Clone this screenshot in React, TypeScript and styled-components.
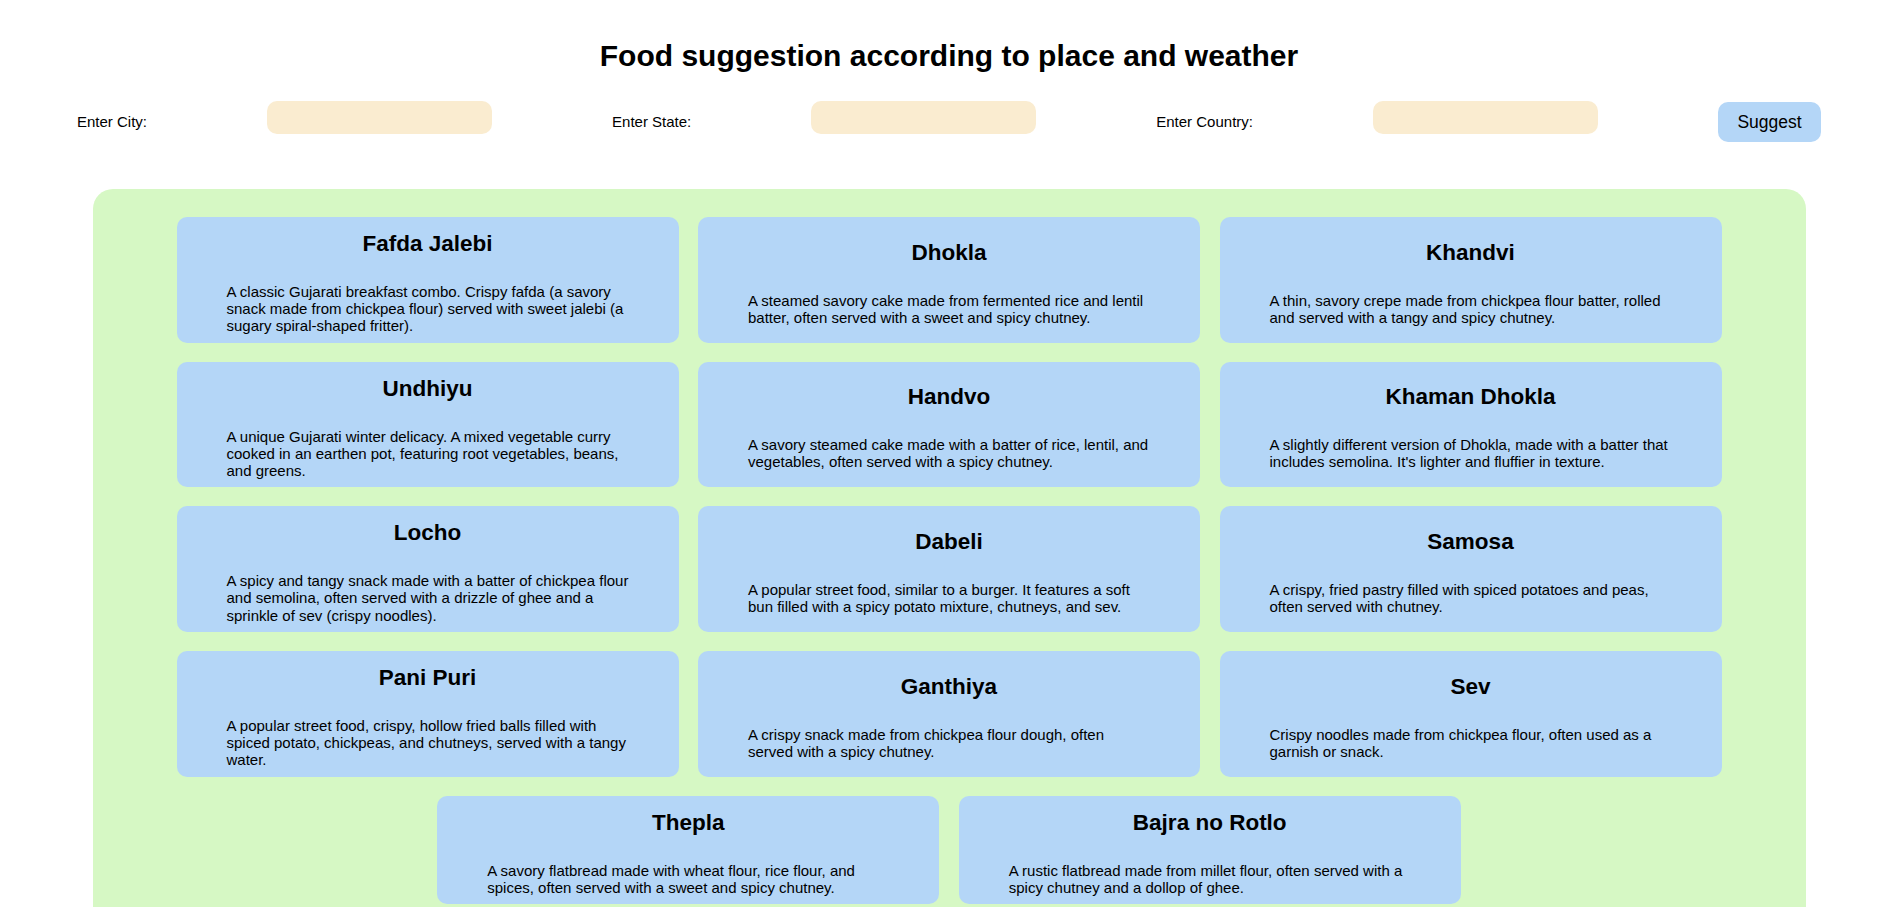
import React from "react";
import styled, { createGlobalStyle } from "styled-components";

const GlobalStyle = createGlobalStyle`
  html, body {
    margin: 0;
    padding: 0;
    background: #ffffff;
  }
  body {
    font-family: "Liberation Sans", Arial, sans-serif;
    font-size: 15px;
    color: #000000;
  }
  * { box-sizing: border-box; }
`;

const Page = styled.div`
  display: flex;
  flex-direction: column;
  align-items: center;
  padding-top: 39px;
`;

const Title = styled.h1`
  margin: 0;
  font-size: 30px;
  font-weight: 700;
  line-height: 34.5px;
  text-align: center;
`;

const Form = styled.form`
  display: flex;
  align-items: flex-start;
  justify-content: center;
  gap: 120px;
  margin-top: 27.5px;
  width: 100%;
`;

const Label = styled.label`
  margin-top: 12px;
  font-size: 15px;
  line-height: 17.25px;
  white-space: nowrap;
`;

const Field = styled.input`
  width: 225px;
  height: 33px;
  border: none;
  border-radius: 10px;
  background: #faecd0;
  padding: 0 10px;
  font-family: inherit;
  font-size: 15px;
  outline: none;
`;

const SuggestButton = styled.button`
  margin-top: 1px;
  width: 103px;
  height: 40px;
  border: none;
  border-radius: 10px;
  background: #b4d6f7;
  color: #000000;
  font-family: "Liberation Sans", Arial, sans-serif;
  font-size: 17.5px;
  cursor: pointer;
`;

const Board = styled.section`
  margin-top: 47px;
  width: 1713px;
  background: #d6f8c4;
  border-radius: 20px;
  padding: 28px 0 30px;
  display: flex;
  flex-wrap: wrap;
  justify-content: center;
  gap: 19px 19.5px;
`;

const Card = styled.article`
  width: 502px;
  background: #b4d6f7;
  border-radius: 10px;
  padding: 14px 0 8px;
  display: flex;
  flex-direction: column;
  justify-content: center;
`;

const CardTitle = styled.h2`
  margin: 0 0 26px;
  font-size: 22.5px;
  font-weight: 700;
  line-height: 25.9px;
  text-align: center;
`;

const CardText = styled.p`
  margin: 0 48px 0 50px;
  font-size: 15px;
  line-height: 17.25px;
  text-align: left;
`;

const foods = [
  {
    name: "Fafda Jalebi",
    text: "A classic Gujarati breakfast combo. Crispy fafda (a savory snack made from chickpea flour) served with sweet jalebi (a sugary spiral-shaped fritter).",
  },
  {
    name: "Dhokla",
    text: "A steamed savory cake made from fermented rice and lentil batter, often served with a sweet and spicy chutney.",
  },
  {
    name: "Khandvi",
    text: "A thin, savory crepe made from chickpea flour batter, rolled and served with a tangy and spicy chutney.",
  },
  {
    name: "Undhiyu",
    text: "A unique Gujarati winter delicacy. A mixed vegetable curry cooked in an earthen pot, featuring root vegetables, beans, and greens.",
  },
  {
    name: "Handvo",
    text: "A savory steamed cake made with a batter of rice, lentil, and vegetables, often served with a spicy chutney.",
  },
  {
    name: "Khaman Dhokla",
    text: "A slightly different version of Dhokla, made with a batter that includes semolina. It's lighter and fluffier in texture.",
  },
  {
    name: "Locho",
    text: "A spicy and tangy snack made with a batter of chickpea flour and semolina, often served with a drizzle of ghee and a sprinkle of sev (crispy noodles).",
  },
  {
    name: "Dabeli",
    text: "A popular street food, similar to a burger. It features a soft bun filled with a spicy potato mixture, chutneys, and sev.",
  },
  {
    name: "Samosa",
    text: "A crispy, fried pastry filled with spiced potatoes and peas, often served with chutney.",
  },
  {
    name: "Pani Puri",
    text: "A popular street food, crispy, hollow fried balls filled with spiced potato, chickpeas, and chutneys, served with a tangy water.",
  },
  {
    name: "Ganthiya",
    text: "A crispy snack made from chickpea flour dough, often served with a spicy chutney.",
  },
  {
    name: "Sev",
    text: "Crispy noodles made from chickpea flour, often used as a garnish or snack.",
  },
  {
    name: "Thepla",
    text: "A savory flatbread made with wheat flour, rice flour, and spices, often served with a sweet and spicy chutney.",
  },
  {
    name: "Bajra no Rotlo",
    text: "A rustic flatbread made from millet flour, often served with a spicy chutney and a dollop of ghee.",
  },
];

export default function App() {
  return (
    <>
      <GlobalStyle />
      <Page>
        <Title>Food suggestion according to place and weather</Title>
        <Form onSubmit={(e) => e.preventDefault()}>
          <Label htmlFor="city">Enter City:</Label>
          <Field id="city" type="text" />
          <Label htmlFor="state">Enter State:</Label>
          <Field id="state" type="text" />
          <Label htmlFor="country">Enter Country:</Label>
          <Field id="country" type="text" />
          <SuggestButton type="submit">Suggest</SuggestButton>
        </Form>
        <Board>
          {foods.map((f) => (
            <Card key={f.name}>
              <CardTitle>{f.name}</CardTitle>
              <CardText>{f.text}</CardText>
            </Card>
          ))}
        </Board>
      </Page>
    </>
  );
}
